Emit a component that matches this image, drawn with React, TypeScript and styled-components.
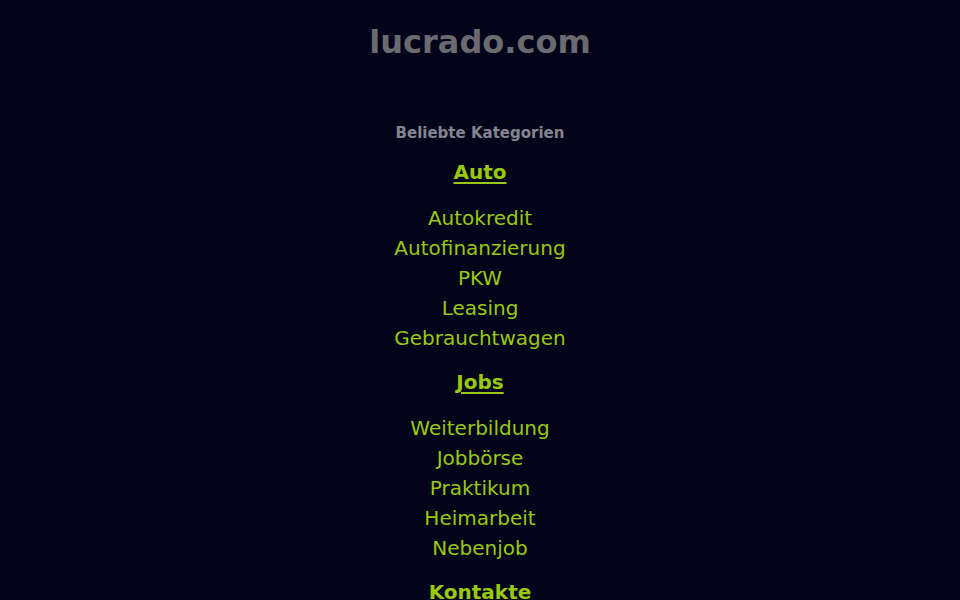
import React from "react";
import styled, { createGlobalStyle } from "styled-components";

const Global = createGlobalStyle`
  html, body { margin: 0; padding: 0; background: #03041a; }
  body { font-family: "DejaVu Sans", "Liberation Sans", sans-serif; }
`;

const Page = styled.div`
  display: flex;
  flex-direction: column;
  align-items: center;
  min-height: 600px;
  background: #03041a;
  padding-top: 24px;
`;

const Title = styled.h1`
  margin: 0;
  font-size: 32px;
  line-height: 36px;
  font-weight: bold;
  color: #6a6a70;
`;

const Subtitle = styled.h2`
  margin: 63px 0 0;
  font-size: 15px;
  line-height: 20px;
  font-weight: bold;
  color: #85858f;
`;

const Section = styled.section`
  display: flex;
  flex-direction: column;
  align-items: center;
  margin-top: 14px;
`;

const Heading = styled.a`
  font-size: 20px;
  line-height: 30px;
  font-weight: bold;
  color: #99c90e;
  text-decoration: underline;
  text-decoration-thickness: 2px;
  text-underline-offset: 3px;
  margin-bottom: 16px;
`;

const List = styled.ul`
  list-style: none;
  margin: 0;
  padding: 0;
  display: flex;
  flex-direction: column;
  align-items: center;
`;

const Item = styled.li`
  font-size: 20px;
  line-height: 30px;
  color: #99c90e;
`;

const data = [
  { title: "Auto", items: ["Autokredit", "Autofinanzierung", "PKW", "Leasing", "Gebrauchtwagen"] },
  { title: "Jobs", items: ["Weiterbildung", "Jobbörse", "Praktikum", "Heimarbeit", "Nebenjob"] },
  { title: "Kontakte", items: ["Partnersuche", "Singles", "Dating", "Flirt", "Freundschaft"] },
];

export default function App() {
  return (
    <>
      <Global />
      <Page>
        <Title>lucrado.com</Title>
        <Subtitle>Beliebte Kategorien</Subtitle>
        {data.map((s) => (
          <Section key={s.title}>
            <Heading href="#">{s.title}</Heading>
            <List>
              {s.items.map((i) => (
                <Item key={i}>{i}</Item>
              ))}
            </List>
          </Section>
        ))}
      </Page>
    </>
  );
}
